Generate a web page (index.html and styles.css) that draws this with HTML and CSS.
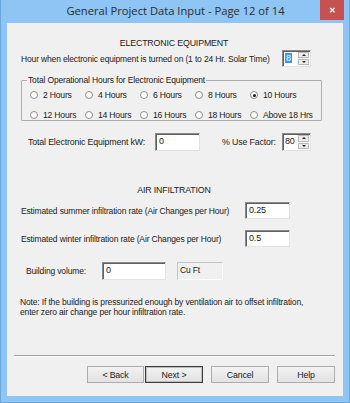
FILE: index.html
```html
<!DOCTYPE html>
<html lang="en">

<head>
    <meta charset="UTF-8">
    <title>General Project Data Input - Page 12 of 14</title>
    <link rel="stylesheet" href="styles.css">
</head>

<body>
    <div class="window">
        <div class="titlebar">
            <span class="title">General Project Data Input - Page 12 of 14</span>
            <span class="close">&#x2715;</span>
        </div>

        <div class="client">
            <div class="heading">ELECTRONIC EQUIPMENT</div>

            <div class="row hour-row">
                <span class="label hour-label">Hour when electronic equipment is turned on (1 to 24 Hr. Solar Time)</span>
                <div class="spinner">
                    <span class="spin-value"><span class="selected">8</span></span>
                    <span class="spin-buttons">
                        <span class="spin-btn"><span class="arrow-up"></span></span>
                        <span class="spin-btn"><span class="arrow-down"></span></span>
                    </span>
                </div>
            </div>

            <fieldset class="group">
                <legend>Total Operational Hours for Electronic Equipment</legend>
                <div class="radios">
                    <label class="radio"><span class="dot"></span>2 Hours</label>
                    <label class="radio"><span class="dot"></span>4 Hours</label>
                    <label class="radio"><span class="dot"></span>6 Hours</label>
                    <label class="radio"><span class="dot"></span>8 Hours</label>
                    <label class="radio"><span class="dot checked"></span>10 Hours</label>
                    <label class="radio"><span class="dot"></span>12 Hours</label>
                    <label class="radio"><span class="dot"></span>14 Hours</label>
                    <label class="radio"><span class="dot"></span>16 Hours</label>
                    <label class="radio"><span class="dot"></span>18 Hours</label>
                    <label class="radio"><span class="dot"></span>Above 18 Hrs</label>
                </div>
            </fieldset>

            <div class="row kw-row">
                <span class="label kw-label">Total Electronic Equipment kW:</span>
                <span class="textbox kw-box">0</span>
                <span class="label use-label">% Use Factor:</span>
                <div class="spinner">
                    <span class="spin-value">80</span>
                    <span class="spin-buttons">
                        <span class="spin-btn"><span class="arrow-up"></span></span>
                        <span class="spin-btn"><span class="arrow-down"></span></span>
                    </span>
                </div>
            </div>

            <div class="heading air-heading">AIR INFILTRATION</div>

            <div class="row rate-row summer">
                <span class="label rate-label">Estimated summer infiltration rate (Air Changes per Hour)</span>
                <span class="textbox rate-box">0.25</span>
            </div>

            <div class="row rate-row winter">
                <span class="label rate-label">Estimated winter infiltration rate (Air Changes per Hour)</span>
                <span class="textbox rate-box">0.5</span>
            </div>

            <div class="row volume-row">
                <span class="label volume-label">Building volume:</span>
                <span class="textbox volume-box">0</span>
                <span class="units">Cu Ft</span>
            </div>

            <p class="note">Note: If the building is pressurized enough by ventilation air to offset infiltration,<br>enter zero air change per hour infiltration rate.</p>

            <div class="separator"></div>

            <div class="buttons">
                <span class="button">&lt; Back</span>
                <span class="button default">Next &gt;</span>
                <span class="button gap">Cancel</span>
                <span class="button gap">Help</span>
            </div>
        </div>
    </div>
</body>

</html>
```

FILE: styles.css
```css
body {
    margin: 0;
    font-family: "Liberation Sans", Arial, sans-serif;
    font-size: 8.5px;
    letter-spacing: -0.15px;
    color: #1a1a1a;
}

.window {
    width: 350px;
    height: 403px;
    box-sizing: border-box;
    background-color: #8ec5f5;
    border: 1px solid #6aa6da;
    border-top: none;
    padding: 0 6px 6px 6px;
}

.titlebar {
    position: relative;
    height: 23px;
    display: flex;
    align-items: center;
    justify-content: center;
}

.title {
    font-family: "Open Sans", "Noto Sans", sans-serif;
    font-size: 11.2px;
    letter-spacing: 0;
    color: #2b2b2b;
    margin-top: -2px;
    margin-left: 1px;
}

.close {
    position: absolute;
    top: 0;
    right: -1px;
    width: 24px;
    height: 20px;
    background-color: #c75050;
    color: #ffffff;
    font-size: 8px;
    font-weight: bold;
    display: flex;
    align-items: center;
    justify-content: center;
}

.client {
    position: relative;
    height: 373px;
    background-color: #f0f0f0;
    display: flex;
    flex-direction: column;
}

.heading {
    height: 12px;
    line-height: 12px;
    margin-top: 14px;
    text-align: center;
    font-size: 8.8px;
    padding-right: 2px;
}

.row {
    display: flex;
    align-items: center;
}

.label {
    white-space: nowrap;
}

.hour-row {
    height: 17px;
    margin-top: 1px;
    padding-left: 14px;
}

.hour-label {
    width: 261px;
}

.spinner {
    width: 29px;
    height: 17px;
    box-sizing: border-box;
    display: flex;
    background: #ffffff;
    border: 1px solid;
    border-color: #8a8a8a #e2e2e2 #e2e2e2 #8a8a8a;
    box-shadow: inset 1px 1px 0 #5f5f5f;
}

.spin-value {
    flex: 1;
    padding: 1px 0 0 2px;
    line-height: 12px;
    font-size: 9px;
}

.selected {
    background-color: #3399ff;
    color: #ffffff;
    padding: 0 1px;
}

.spin-buttons {
    width: 11px;
    display: flex;
    flex-direction: column;
    gap: 1px;
    padding: 1px 1px 1px 0;
}

.spin-btn {
    flex: 1;
    background: #ececec;
    border: 1px solid #b9b9b9;
    display: flex;
    align-items: center;
    justify-content: center;
}

.arrow-up {
    border-left: 2px solid transparent;
    border-right: 2px solid transparent;
    border-bottom: 2px solid #222;
}

.arrow-down {
    border-left: 2px solid transparent;
    border-right: 2px solid transparent;
    border-top: 2px solid #222;
}

.group {
    margin: 9px 0 0 14px;
    width: 301px;
    height: 45px;
    box-sizing: border-box;
    padding: 0;
    border: 1px solid #adadad;
    border-radius: 1px;
}

.group legend {
    padding: 0 1px;
    margin-left: 5px;
    line-height: 9px;
    font-size: 8.5px;
}

.radios {
    display: grid;
    grid-template-columns: repeat(4, 55px) 60px;
    grid-auto-rows: 20px;
    padding: 0 0 0 8px;
}

.radio {
    display: flex;
    align-items: center;
    gap: 3px;
    white-space: nowrap;
    font-size: 8.6px;
    letter-spacing: -0.2px;
}

.dot {
    flex-shrink: 0;
    width: 8px;
    height: 8px;
    box-sizing: border-box;
    border-radius: 50%;
    border: 1px solid #8c8c8c;
    background: #ffffff;
    display: flex;
    align-items: center;
    justify-content: center;
    margin-right: 2px;
}

.dot.checked::after {
    content: "";
    width: 3px;
    height: 3px;
    border-radius: 50%;
    background: #1a1a1a;
}

.textbox {
    box-sizing: border-box;
    background: #ffffff;
    border: 1px solid;
    border-color: #8a8a8a #e2e2e2 #e2e2e2 #8a8a8a;
    box-shadow: inset 1px 1px 0 #5f5f5f;
    padding: 1px 0 0 3px;
    line-height: 12px;
    font-size: 9px;
}

.kw-row {
    height: 18px;
    margin-top: 12px;
    padding-left: 21px;
}

.kw-label {
    width: 127px;
    font-size: 8.8px;
}

.kw-box {
    width: 45px;
    height: 18px;
}

.use-label {
    margin-left: 22px;
    width: 60px;
    font-size: 8.8px;
}

.kw-row .spinner {
    height: 18px;
}

.air-heading {
    margin-top: 33px;
}

.rate-row {
    height: 17px;
    padding-left: 14px;
}

.summer {
    margin-top: 6px;
}

.winter {
    margin-top: 11px;
}

.rate-label {
    width: 224px;
}

.rate-box {
    width: 45px;
    height: 17px;
}

.volume-row {
    height: 18px;
    margin-top: 15px;
    padding-left: 19px;
}

.volume-label {
    width: 76px;
}

.volume-box {
    width: 64px;
    height: 18px;
}

.units {
    margin-left: 11px;
    width: 46px;
    height: 18px;
    box-sizing: border-box;
    border: 1px solid;
    border-color: #c4c4c4 #ffffff #ffffff #c4c4c4;
    padding: 1px 0 0 2px;
    line-height: 12px;
}

.note {
    margin: 18px 0 0 13px;
    line-height: 9.5px;
}

.separator {
    margin: 38px 0 0 7px;
    width: 321px;
    height: 0;
    border-top: 1px solid #a0a0a0;
    border-bottom: 1px solid #ffffff;
}

.buttons {
    display: flex;
    margin-top: 9px;
    padding-left: 80px;
}

.button {
    width: 57px;
    height: 17px;
    box-sizing: border-box;
    background: linear-gradient(#f2f2f2, #e2e2e2);
    border: 1px solid #acacac;
    display: flex;
    align-items: center;
    justify-content: center;
    font-size: 8.8px;
}

.button.default {
    margin-left: 1px;
    width: 58px;
    border: 1px solid #3c3c3c;
    box-shadow: inset 0 0 0 1px #bdbdbd;
}

.button.gap {
    margin-left: 8px;
    width: 58px;
}
```
